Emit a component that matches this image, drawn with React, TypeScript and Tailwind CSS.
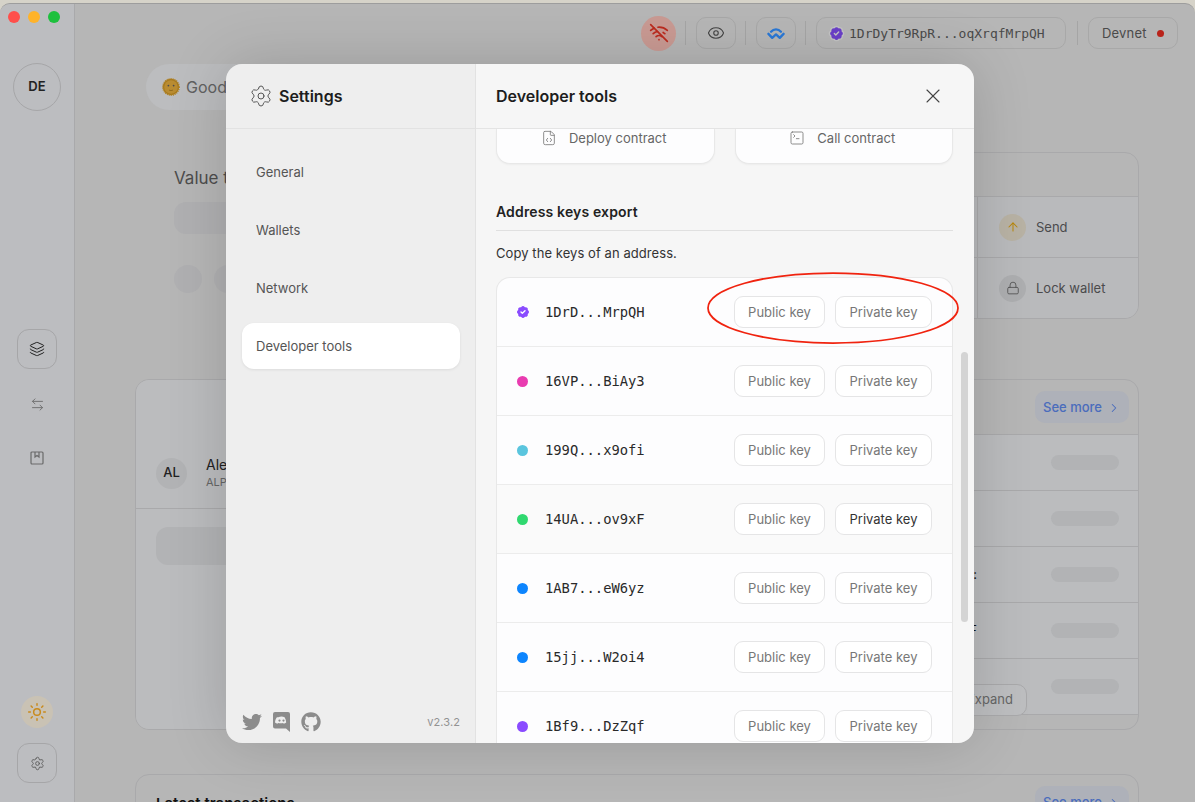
import React from "react";
import { ArrowLeftRight, ArrowUp, BadgeCheck, ChevronRight, Eye, FileCode, Layers, Lock, Settings, SquareTerminal, Sun, WifiOff, X } from "lucide-react";
import { FaGithub, FaTwitter } from "react-icons/fa";

const MONO = "font-['DejaVu_Sans_Mono',monospace]";

const addresses = [
  { id: "1DrD...MrpQH", dot: "" },
  { id: "16VP...BiAy3", dot: "bg-[#e93cb0]" },
  { id: "199Q...x9ofi", dot: "bg-[#5ac5de]" },
  { id: "14UA...ov9xF", dot: "bg-[#2fd86f]" },
  { id: "1AB7...eW6yz", dot: "bg-[#0d85fe]" },
  { id: "15jj...W2oi4", dot: "bg-[#0d85fe]" },
  { id: "1Bf9...DzZqf", dot: "bg-[#8a4bff]" },
];

function Divider({ wide }: { wide?: boolean }) {
  return <div className={`w-px h-[24px] bg-[#a5a5a5] mr-[10px] ${wide ? "ml-[11px]" : "ml-[9px]"}`} />;
}

function SeeMore() {
  return (
    <div className="w-[94px] h-[32px] shrink-0 rounded-[10px] bg-[#aeb1b9] flex items-center pl-[8px] pt-[1px] gap-[5px] text-[13px] text-[#4a6cbc] font-medium">
      See more <ChevronRight size={14} strokeWidth={1.75} />
    </div>
  );
}

function SunFace() {
  return (
    <svg width="18" height="18" viewBox="0 0 18 18" className="shrink-0">
      <circle cx="9" cy="9" r="8.2" fill="#a87a1c" stroke="#b08224" strokeWidth="1.4" strokeDasharray="1 1" />
      <circle cx="9" cy="9" r="6.8" fill="#b98c32" />
      <circle cx="6.4" cy="7.6" r="0.9" fill="#4a4a50" />
      <circle cx="11.6" cy="7.6" r="0.9" fill="#4a4a50" />
      <path d="M7 12c1.2.7 2.8.7 4 0" stroke="#8a6418" strokeWidth="0.8" fill="none" />
    </svg>
  );
}

function WalletConnect() {
  return (
    <svg width="18" height="13" viewBox="0 0 20 14" fill="none" stroke="#2a78d6" strokeWidth="2.6" strokeLinejoin="round" strokeLinecap="round">
      <path d="M4.5 5C7.5 1.6 12.5 1.6 15.5 5" />
      <path d="M1.6 7.4 5.8 11.8 10 8l4.2 3.8 4.2-4.4" />
    </svg>
  );
}

function PackageIcon() {
  return (
    <svg width="14" height="14" viewBox="0 0 14 14" fill="none" stroke="#6a6a6a" strokeWidth="1.2">
      <rect x="1" y="1" width="12" height="12" rx="1" />
      <path d="M5 1v5l2-1.4L9 6V1" />
    </svg>
  );
}

function DiscordOld() {
  return (
    <svg width="17" height="20" viewBox="0 0 17 20" className="ml-[11px] shrink-0">
      <path d="M2 0h13a2 2 0 0 1 2 2v18l-4-3.4H2a2 2 0 0 1-2-2V2a2 2 0 0 1 2-2z" fill="#8c8c8c" />
      <path d="M5.4 5.2c2-.9 4.2-.9 6.2 0 1 1.7 1.5 3.5 1.6 5.4-.7.6-1.6 1-2.5 1.2l-.5-.9c-1.8.5-3.4.5-5.2 0l-.5.9c-.9-.2-1.8-.6-2.5-1.2.1-1.9.6-3.7 1.9-5.4z" fill="#eeeeee" />
      <circle cx="6.5" cy="8.6" r="1.1" fill="#8c8c8c" />
      <circle cx="10.5" cy="8.6" r="1.1" fill="#8c8c8c" />
    </svg>
  );
}

function Sidebar() {
  return (
    <aside className="w-[75px] shrink-0 bg-[#bcbdc0] border-r border-[#a9a9ab] flex flex-col items-center pt-[7px] pb-[19px]">
      <div className="w-full flex gap-[8px] pl-[8px] mb-[40px]">
        <span className="w-[12px] h-[12px] rounded-full bg-[#ff4f4b]" />
        <span className="w-[12px] h-[12px] rounded-full bg-[#ffb32a]" />
        <span className="w-[12px] h-[12px] rounded-full bg-[#1dc03d]" />
      </div>
      <div className="w-[48px] h-[48px] rounded-full border border-[#a6a6a8] flex items-center justify-center text-[13px] font-semibold text-[#222]">DE</div>
      <div className="w-[40px] h-[40px] mt-[218px] rounded-[12px] border border-[#a6a6a8] flex items-center justify-center text-[#222]">
        <Layers size={16} strokeWidth={1.5} />
      </div>
      <div className="w-[40px] h-[40px] mt-[15px] flex items-center justify-center text-[#6e6e6e]">
        <ArrowLeftRight size={15} strokeWidth={1.5} />
      </div>
      <div className="w-[40px] h-[40px] mt-[14px] flex items-center justify-center">
        <PackageIcon />
      </div>
      <div className="flex-1" />
      <div className="w-[32px] h-[32px] rounded-full bg-[#c9c2b4] flex items-center justify-center text-[#c98a1b]">
        <Sun size={20} strokeWidth={1.75} />
      </div>
      <div className="w-[40px] h-[40px] mt-[15px] rounded-[12px] border border-[#a6a6a8] flex items-center justify-center text-[#5e5e5e]">
        <Settings size={15} strokeWidth={1.5} />
      </div>
    </aside>
  );
}

function TopBar() {
  return (
    <header className="h-[60px] shrink-0 -mr-[56px] flex items-center justify-end pr-[17px] pb-[2px]">
      <div className="w-[35px] h-[35px] rounded-full bg-[#c99a93] flex items-center justify-center text-[#bb2a1e]">
        <WifiOff size={20} strokeWidth={2} />
      </div>
      <Divider />
      <div className="w-[40px] h-[32px] rounded-[10px] border border-[#a8a8a8] flex items-center justify-center text-[#444]">
        <Eye size={18} strokeWidth={1.5} />
      </div>
      <Divider />
      <div className="w-[40px] h-[32px] rounded-[10px] border border-[#a8a8a8] flex items-center justify-center">
        <WalletConnect />
      </div>
      <Divider />
      <div className={`w-[250px] h-[32px] rounded-[10px] border border-[#a8a8a8] flex items-center pl-[11px] gap-[4px] text-[13px] text-[#4a4a4a] ${MONO}`}>
        <BadgeCheck size={17} className="text-[#c4c4c4] fill-[#6a3fc8] shrink-0" />
        <span className="pt-[1px]">1DrDyTr9RpR...oqXrqfMrpQH</span>
      </div>
      <Divider wide />
      <div className="w-[90px] h-[32px] rounded-[10px] border border-[#a8a8a8] flex items-center pl-[13px] gap-[10px] text-[13px] text-[#4a4a4a] tracking-[0.2px]">
        <span className="pt-[1px]">Devnet</span> <span className="w-[7px] h-[7px] rounded-full bg-[#b9231a]" />
      </div>
    </header>
  );
}

function SideAction({ tint, label, children }: { tint: string; label: string; children: React.ReactNode }) {
  return (
    <div className="h-full flex items-center border-l border-[#a9a9ab] pl-[21px] gap-[10px] text-[13px] text-[#4b4b4c]">
      <span className={`w-[27px] h-[27px] rounded-full flex items-center justify-center ${tint}`}>{children}</span>
      <span className="pt-[1px]">{label}</span>
    </div>
  );
}

function ValueSection() {
  return (
    <section className="h-[167px] mt-[42px] shrink-0 flex">
      <div className="flex-1 pl-[39px] pt-[15px]">
        <div className="text-[17px] leading-[22px] text-[#4d4d4d]">Value today</div>
        <div className="w-[200px] h-[32px] mt-[13px] rounded-[12px] bg-[#b0b0b2]" />
        <div className="flex gap-[12px] mt-[31px]">
          <div className="w-[28px] h-[28px] rounded-full bg-[#b0b0b2]" />
          <div className="w-[28px] h-[28px] rounded-full bg-[#b0b0b2]" />
        </div>
      </div>
      <div className="w-[400px] rounded-[14px] border border-[#a9a9ab] flex flex-col overflow-hidden">
        <div className="h-[44px] border-b border-[#a9a9ab]" />
        <div className="h-[61px] bg-[#b9babc] border-b border-[#a9a9ab] pl-[237px]">
          <SideAction tint="bg-[#b8b2a4] text-[#b8860b]" label="Send"><ArrowUp size={14} strokeWidth={1.75} /></SideAction>
        </div>
        <div className="flex-1 bg-[#b9babc] pl-[237px]">
          <SideAction tint="bg-[#adaeb0] text-[#555]" label="Lock wallet"><Lock size={14} strokeWidth={1.5} /></SideAction>
        </div>
      </div>
    </section>
  );
}

function TokensSection() {
  const rows = ["", "", "token:", "xrqfMrpQF", ""];
  return (
    <section className="relative h-[351px] mt-[60px] shrink-0 rounded-[14px] border border-[#a9a9ab] flex overflow-hidden">
      <div className="w-[400px] bg-[#bbbcbe] flex flex-col">
        <div className="h-[129px] shrink-0 flex items-center pl-[20px] pt-[80px] pb-[22px] gap-[19px] border-b border-[#a9a9ab]">
          <div className="w-[31px] h-[31px] rounded-full bg-[#b2b3b5] flex items-center justify-center text-[13px] font-medium text-[#222]">AL</div>
          <div>
            <div className="text-[14px] leading-[18px] text-[#222]">Alephium</div>
            <div className="text-[11px] leading-[16px] text-[#666]">ALPH</div>
          </div>
        </div>
        <div className="mx-[20px] mt-[18px] h-[38px] rounded-[12px] bg-[#b2b3b5]" />
      </div>
      <div className="flex-1 flex flex-col">
        <div className="h-[55px] shrink-0 flex items-center justify-end pr-[9px] border-b border-[#a9a9ab]">
          <SeeMore />
        </div>
        {rows.map((text, i) => (
          <div key={i} className="h-[56px] shrink-0 bg-[#bbbcbe] border-b border-[#a9a9ab] flex items-center justify-end">
            <span className="text-[13px] text-[#111] pr-[161px]">{text}</span>
            <span className="absolute right-[19px] w-[68px] h-[15px] rounded-full bg-[#b2b3b5]" />
          </div>
        ))}
      </div>
      <div className="absolute right-[111px] bottom-[13px] w-[110px] h-[32px] rounded-[10px] border border-[#a9a9ab] bg-[#bdbec0] flex items-center justify-end pr-[13px] text-[13px] text-[#666]">
        Expand
      </div>
    </section>
  );
}

function TransactionsSection() {
  return (
    <section className="h-[80px] mt-[44px] shrink-0 rounded-[14px] border border-[#a9a9ab] flex justify-between items-start pl-[20px] pr-[9px] pt-[11px]">
      <h2 className="text-[15px] leading-[32px] pt-[2px] font-semibold text-[#111]">Latest transactions</h2>
      <SeeMore />
    </section>
  );
}

function KeyButton({ label, dark, w }: { label: string; dark?: boolean; w: string }) {
  return (
    <div className={`${w} h-[32px] pt-[1px] rounded-[9px] border border-[#e5e5e6] bg-white flex items-center justify-center text-[13px] ${dark ? "text-[#333]" : "text-[#777]"}`}>
      {label}
    </div>
  );
}

function AddressRow({ id, dot, hover }: { id: string; dot: string; hover: boolean }) {
  return (
    <div className={`h-[69px] shrink-0 border-b border-[#ececec] flex items-center pl-[20px] pr-[20px] ${hover ? "bg-[#fafafa]" : ""}`}>
      {dot ? (
        <span className={`w-[11px] h-[11px] rounded-full ${dot}`} />
      ) : (
        <BadgeCheck size={16} className="text-white fill-[#8a4bff] -ml-[2px] -mr-[3px]" />
      )}
      <span className={`ml-[17px] text-[13.8px] text-[#2a2a2a] ${MONO}`}>{id}</span>
      <div className="ml-auto flex gap-[10px]">
        <KeyButton label="Public key" w="w-[91px]" />
        <KeyButton label="Private key" w="w-[97px]" dark={hover} />
      </div>
    </div>
  );
}

function ContractCard({ label, children }: { label: string; children: React.ReactNode }) {
  return (
    <div className="flex-1 h-[35px] pr-[3px] bg-[#fdfdfe] border border-t-0 border-[#e8e8e8] rounded-b-[14px] flex items-start justify-center gap-[12px] text-[13px] text-[#666] shadow-[0_1px_2px_rgba(0,0,0,0.04)]">
      {children}
      <span className="leading-[18px]">{label}</span>
    </div>
  );
}

function SettingsModal() {
  const nav = ["General", "Wallets", "Network", "Developer tools"];
  return (
    <div className="absolute left-[226px] top-[64px] w-[748px] h-[679px] rounded-[16px] overflow-hidden flex shadow-[0_0_60px_rgba(0,0,0,0.16)]">
      <div className="w-[250px] shrink-0 bg-[#eeeeee] border-r border-[#e2e2e2] flex flex-col">
        <div className="h-[65px] shrink-0 border-b border-[#e2e2e2] flex items-center pl-[23px] gap-[6px]">
          <Settings size={24} strokeWidth={1} className="text-[#555]" />
          <span className="text-[16px] font-semibold text-[#1d1d1d]">Settings</span>
        </div>
        <nav className="pl-[16px] pr-[15px] pt-[20px] flex flex-col gap-[12px]">
          {nav.map((n, i) => (
            <div key={n} className={`h-[46px] pt-[1px] rounded-[12px] flex items-center pl-[14px] text-[13px] text-[#555] ${i === 3 ? "bg-white shadow-[0_1px_3px_rgba(0,0,0,0.08)]" : ""}`}>
              {n}
            </div>
          ))}
        </nav>
        <div className="mt-auto h-[42px] flex items-center pl-[16px] pr-[15px] text-[#8c8c8c]">
          <FaTwitter size={20} />
          <DiscordOld />
          <FaGithub size={20} className="ml-[11px]" />
          <span className="ml-auto text-[11px] tracking-[0.1px] text-[#929292]">v2.3.2</span>
        </div>
      </div>
      <div className="relative flex-1 min-w-0 bg-[#f6f6f6] flex flex-col">
        <div className="h-[65px] shrink-0 border-b border-[#e4e4e4] flex items-center justify-between pl-[20px] pr-[29px]">
          <span className="text-[16px] font-semibold text-[#1d1d1d]">Developer tools</span>
          <X size={24} strokeWidth={1.1} className="text-[#444]" />
        </div>
        <div className="flex-1 min-h-0 overflow-hidden pl-[20px] pr-[21px]">
          <div className="flex gap-[20px]">
            <ContractCard label="Deploy contract"><FileCode size={16} strokeWidth={1.25} className="mt-[1px] text-[#777]" /></ContractCard>
            <ContractCard label="Call contract"><SquareTerminal size={16} strokeWidth={1.25} className="mt-[1px] text-[#777]" /></ContractCard>
          </div>
          <h3 className="mt-[38px] pb-[8px] border-b border-[#e0e0e0] text-[14px] tracking-[0.15px] leading-[20px] font-semibold text-[#222]">Address keys export</h3>
          <p className="mt-[12px] text-[13px] tracking-[0.07px] leading-[20px] text-[#333]">Copy the keys of an address.</p>
          <div className="mt-[14px] border border-b-0 border-[#e8e8e8] rounded-t-[14px] bg-[#fdfdfe] flex flex-col">
            {addresses.map((a, i) => (
              <AddressRow key={a.id} id={a.id} dot={a.dot} hover={i === 3} />
            ))}
          </div>
        </div>
        <div className="absolute left-[485px] top-[288px] w-[7px] h-[270px] rounded-full bg-[#d4d4d4]" />
      </div>
      <svg className="absolute left-[481px] top-[208px]" width="252" height="72" viewBox="0 0 252 72" fill="none">
        <ellipse cx="126" cy="36" rx="125" ry="35" stroke="#f0230f" strokeWidth="1.75" />
      </svg>
    </div>
  );
}

export default function App() {
  return (
    <div className="relative w-[1195px] h-[802px] overflow-hidden bg-[#d6d3c9] pt-[3px] font-[Inter,sans-serif] antialiased">
      <div className="h-[799px] rounded-t-[10px] overflow-hidden bg-[#b6b6b6] border-t border-[#9d9d9d] flex">
        <Sidebar />
        <main className="flex-1 min-w-0 flex flex-col pl-[60px] pr-[56px]">
          <TopBar />
          <div className="h-[46px] w-[300px] shrink-0 ml-[11px] rounded-full bg-[#bcbdbf] flex items-center pl-[16px] gap-[6px] text-[16px] text-[#616161]">
            <SunFace /> Good morning
          </div>
          <ValueSection />
          <TokensSection />
          <TransactionsSection />
        </main>
      </div>
      <SettingsModal />
    </div>
  );
}
